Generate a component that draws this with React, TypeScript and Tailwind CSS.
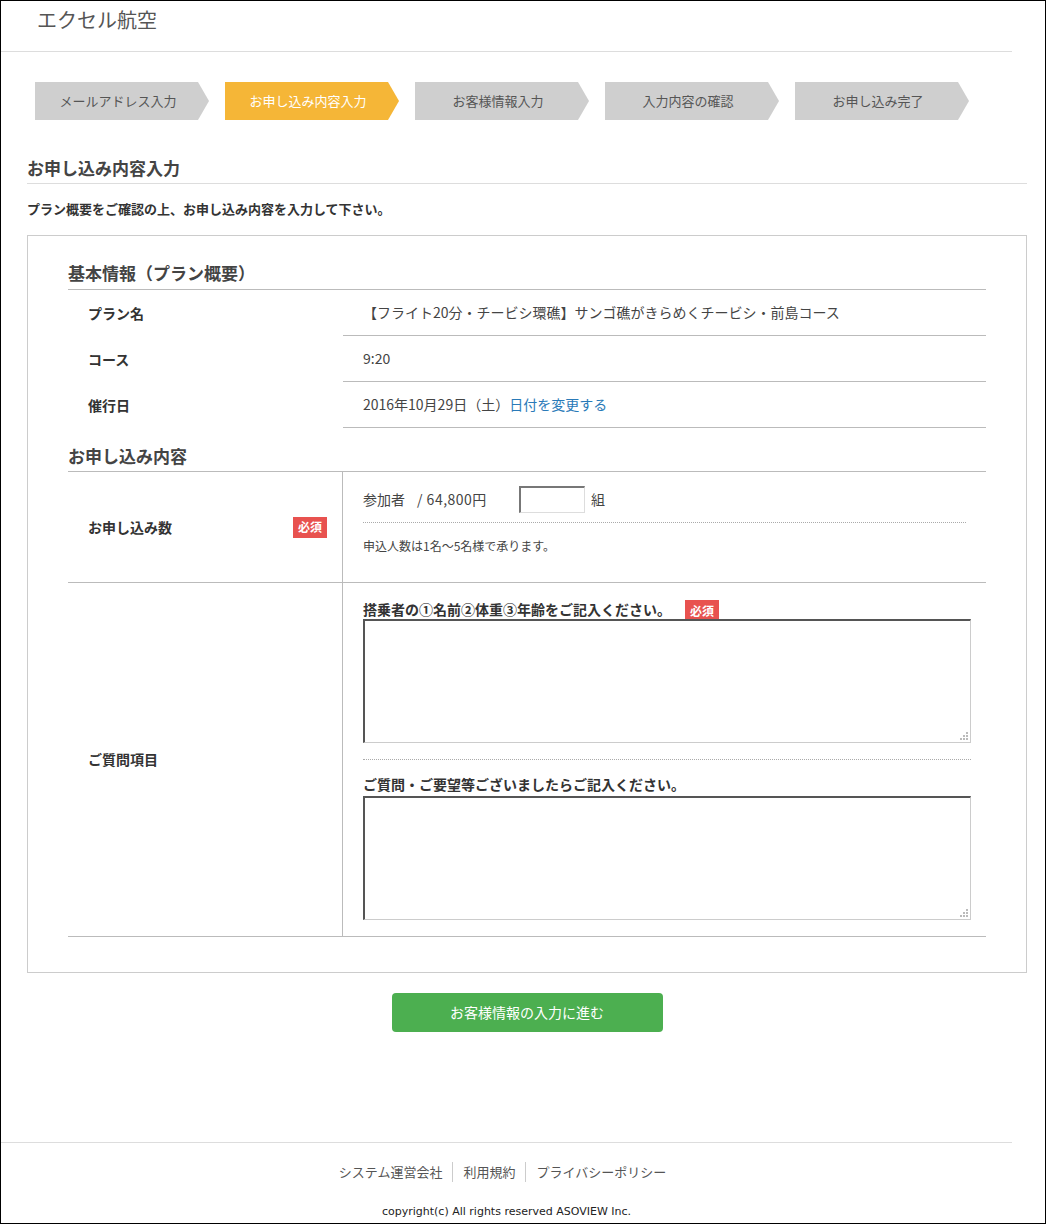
const font = { fontFamily: '"Noto Sans CJK JP", "Noto Sans", sans-serif' };

const steps = ['メールアドレス入力', 'お申し込み内容入力', 'お客様情報入力', '入力内容の確認', 'お申し込み完了'];

const Badge = () => (
  <span className="inline-flex items-center justify-center w-[34px] h-[21px] bg-[#e8524f] text-white text-[12px] font-bold leading-none">必須</span>
);

const Step = ({ label, active }: { label: string; active: boolean }) => (
  <div className="flex h-[38px] w-[174px]">
    <div
      className={`flex-1 flex items-center justify-center text-[13px] pl-[4px] ${
        active ? 'bg-[#f5b637] text-white' : 'bg-[#cfcfcf] text-[#555]'
      }`}
    >
      {label}
    </div>
    <svg width="12" height="38" viewBox="0 0 12 38" className="shrink-0">
      <polygon points="0,0 1,0 12,19 1,38 0,38" fill={active ? '#f5b637' : '#cfcfcf'} />
    </svg>
  </div>
);

const TextArea = () => (
  <div className="relative w-[608px] h-[124px] bg-white border-t-2 border-l-2 border-r border-b border-t-[#555] border-l-[#555] border-r-[#ccc] border-b-[#ccc]">
    <svg width="9" height="9" viewBox="0 0 9 9" className="absolute right-[2px] bottom-[2px]">
      <rect x="7" y="1" width="2" height="2" fill="#bbb" />
      <rect x="4" y="4" width="2" height="2" fill="#bbb" />
      <rect x="7" y="4" width="2" height="2" fill="#bbb" />
      <rect x="1" y="7" width="2" height="2" fill="#bbb" />
      <rect x="4" y="7" width="2" height="2" fill="#bbb" />
      <rect x="7" y="7" width="2" height="2" fill="#bbb" />
    </svg>
  </div>
);

export default function App() {
  return (
    <div style={font} className="w-[1046px] h-[1224px] border border-black bg-white flex flex-col text-[#444]">
      {/* header */}
      <header className="w-[1011px] h-[51px] border-b border-[#ddd] pl-[36px] pt-[5px]">
        <div className="text-[20px] leading-[28px] text-[#555]">エクセル航空</div>
      </header>

      {/* steps */}
      <div className="flex gap-[16px] pl-[34px] mt-[30px]">
        {steps.map((s, i) => (
          <Step key={s} label={s} active={i === 1} />
        ))}
      </div>

      <main className="pl-[26px]">
        <div className="w-[1000px]">
          <h2 className="mt-[36px] text-[17px] font-bold leading-[24px] pb-[3px] border-b border-[#ddd]">お申し込み内容入力</h2>
          <p className="mt-[15px] text-[13px] font-bold leading-[20px] text-[#333]">プラン概要をご確認の上、お申し込み内容を入力して下さい。</p>

          <section className="mt-[16px] border border-[#ccc] px-[40px] pt-[25px] pb-[35px]">
            <h3 className="text-[17px] font-bold leading-[24px] pb-[4px] border-b border-[#bbb]">基本情報（プラン概要）</h3>
            {[
              ['プラン名', '【フライト20分・チービシ環礁】サンゴ礁がきらめくチービシ・前島コース'],
              ['コース', '9:20'],
            ].map(([k, v]) => (
              <div key={k} className="flex h-[46px]">
                <div className="w-[275px] flex items-center pl-[20px] text-[14px] font-bold text-[#333]">{k}</div>
                <div className="flex-1 flex items-center pl-[20px] text-[14px] border-b border-[#bbb]">{v}</div>
              </div>
            ))}
            <div className="flex h-[46px]">
              <div className="w-[275px] flex items-center pl-[20px] text-[14px] font-bold text-[#333]">催行日</div>
              <div className="flex-1 flex items-center pl-[20px] text-[14px] border-b border-[#bbb]">
                2016年10月29日（土）<span className="text-[#2a7ab8]">日付を変更する</span>
              </div>
            </div>

            <h3 className="mt-[16px] text-[17px] font-bold leading-[24px] pb-[3px] border-b border-[#bbb]">お申し込み内容</h3>

            {/* row 1 */}
            <div className="flex h-[111px] border-b border-[#bbb]">
              <div className="w-[275px] shrink-0 border-r border-[#bbb] flex items-center justify-between pl-[20px] pr-[15px]">
                <span className="text-[14px] font-bold text-[#333]">お申し込み数</span>
                <Badge />
              </div>
              <div className="flex-1 pl-[20px] pr-[20px] pt-[14px]">
                <div className="flex items-center h-[26px] text-[14px]">
                  <span>参加者</span>
                  <span className="ml-[12px] tracking-[0.5px]">/ 64,800円</span>
                  <div className="ml-[32px] w-[66px] h-[27px] border-t-2 border-l-2 border-r border-b border-t-[#777] border-l-[#777] border-r-[#ddd] border-b-[#ddd]" />
                  <span className="ml-[6px]">組</span>
                </div>
                <div className="mt-[10px] border-b border-dotted border-[#aaa]" />
                <p className="mt-[14px] text-[12px] leading-[18px]">申込人数は1名～5名様で承ります。</p>
              </div>
            </div>

            {/* row 2 */}
            <div className="flex h-[354px] border-b border-[#bbb]">
              <div className="w-[275px] shrink-0 border-r border-[#bbb] flex items-center pl-[20px]">
                <span className="text-[14px] font-bold text-[#333]">ご質問項目</span>
              </div>
              <div className="flex-1 pl-[20px] pr-[20px] pt-[16px]">
                <div className="flex items-center h-[20px]">
                  <span className="text-[14px] font-bold text-[#333]">搭乗者の①名前②体重③年齢をご記入ください。</span>
                  <span className="ml-[14px]"><Badge /></span>
                </div>
                <TextArea />
                <div className="mt-[16px] border-b border-dotted border-[#aaa]" />
                <div className="mt-[14px] h-[20px] text-[14px] font-bold leading-[20px] text-[#333]">ご質問・ご要望等ございましたらご記入ください。</div>
                <div className="mt-[2px]">
                  <TextArea />
                </div>
              </div>
            </div>
          </section>

          <div className="flex justify-center mt-[20px]">
            <button className="w-[271px] h-[39px] rounded-[4px] bg-[#4caf50] text-white text-[14px]">お客様情報の入力に進む</button>
          </div>
        </div>
      </main>

      {/* footer */}
      <footer className="mt-auto w-[1011px] border-t border-[#ddd]">
        <div className="flex justify-center items-center pt-[19px] text-[13px] text-[#555] pr-[8px]">
          <span className="px-[10px] leading-[20px]">システム運営会社</span>
          <span className="px-[10px] leading-[20px] border-l border-[#ccc]">利用規約</span>
          <span className="px-[10px] leading-[20px] border-l border-[#ccc]">プライバシーポリシー</span>
        </div>
        <div
          style={{ fontFamily: '"DejaVu Sans", "Noto Sans", sans-serif' }}
          className="mt-[22px] h-[19px] text-center text-[11px] leading-[16px] text-[#222]"
        >
          copyright(c) All rights reserved ASOVIEW Inc.
        </div>
      </footer>
    </div>
  );
}
